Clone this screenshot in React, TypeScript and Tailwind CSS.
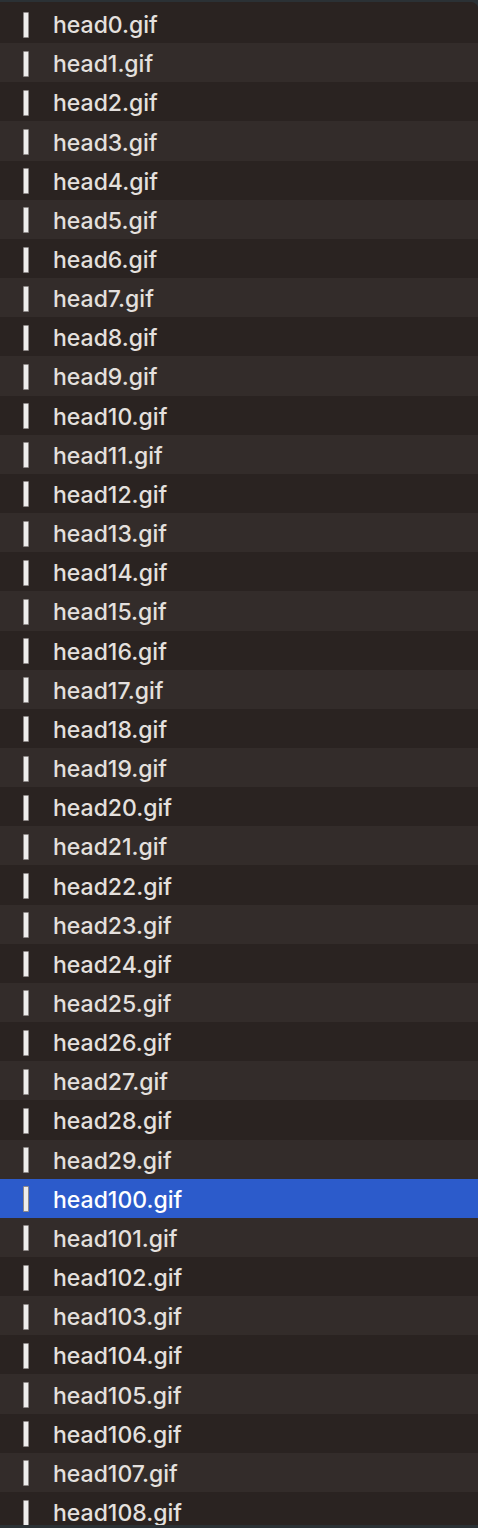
const files = [
  ...Array.from({ length: 30 }, (_, i) => `head${i}.gif`),
  ...Array.from({ length: 9 }, (_, i) => `head${100 + i}.gif`),
];

const selected = "head100.gif";

function FileRow({ name, index }: { name: string; index: number }) {
  const isSelected = name === selected;
  const bg = isSelected ? "bg-[#2c5bcb]" : index % 2 === 0 ? "bg-[#2a2321]" : "bg-[#332c2a]";
  return (
    <div className={`flex h-[39.17px] shrink-0 items-center ${bg}`}>
      <div className="ml-[23px] mt-[2px] h-[26px] w-[6px] rounded-[1px] border border-[#8e8988] bg-[#eeedec]" />
      <span
        className={`ml-[24px] pt-[4px] text-[23px] font-medium leading-none ${
          isSelected ? "text-white" : "text-[#e4e0de]"
        }`}
        style={{ fontFamily: "Inter, 'Noto Sans', sans-serif" }}
      >
        {name}
      </span>
    </div>
  );
}

export default function App() {
  return (
    <div className="flex h-[1528px] w-[478px] flex-col overflow-hidden bg-[#2b3135]">
      <div className="mt-[2px] mb-[3px] flex flex-1 flex-col overflow-hidden rounded-tr-[7px] bg-[#2a2321] pt-[2px]">
        {files.map((f, i) => (
          <FileRow key={f} name={f} index={i} />
        ))}
      </div>
    </div>
  );
}
